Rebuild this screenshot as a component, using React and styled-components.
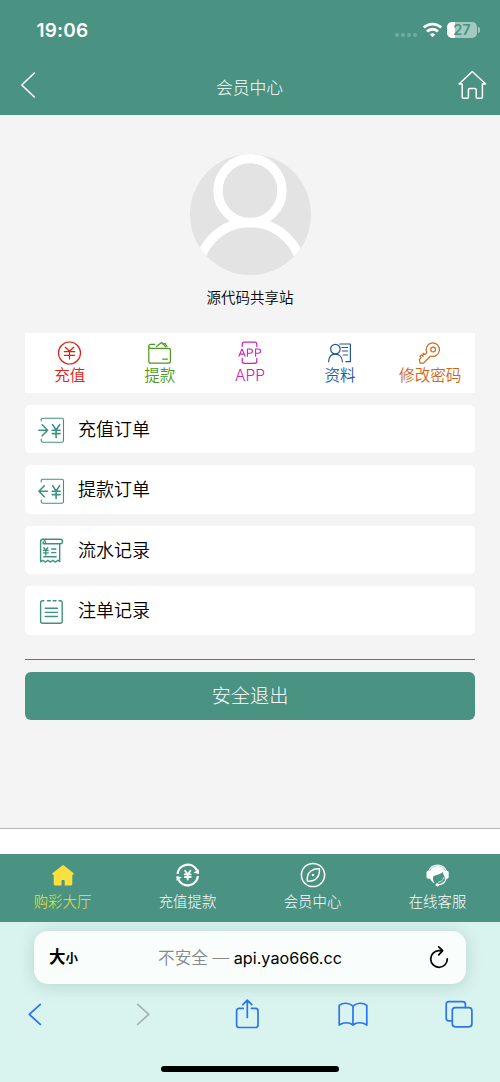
import React from 'react';
import styled, { createGlobalStyle } from 'styled-components';

const GREEN = '#4a9282';
const ICON_GREEN = '#3f927f';

const GlobalStyle = createGlobalStyle`
    * {
        box-sizing: border-box;
    }
    body {
        margin: 0;
        background: #fff;
        font-family: Inter, "Noto Sans CJK SC", sans-serif;
    }
    svg {
        display: block;
        flex: none;
        overflow: visible;
    }
`;

const Page = styled.div`
    display: flex;
    flex-direction: column;
    width: 500px;
    height: 1082px;
    overflow: hidden;
`;

const Header = styled.header`
    height: 114.5px;
    flex: none;
    background: ${GREEN};
    color: #fff;
`;

const StatusBar = styled.div`
    display: flex;
    align-items: center;
    justify-content: space-between;
    height: 60px;
    padding: 0 20px 0 36.5px;
`;

const Clock = styled.span`
    padding-top: 2px;
    font-size: 19px;
    font-weight: 600;
    line-height: 24px;
    letter-spacing: 0.2px;
`;

const StatusIcons = styled.div`
    display: flex;
    align-items: center;
`;

const Dots = styled.div`
    display: flex;
    gap: 2px;
    margin: 9px 6px 0 0;
    span {
        width: 4px;
        height: 4px;
        border-radius: 50%;
        background: #72aca0;
    }
`;

const Battery = styled.div`
    display: flex;
    align-items: center;
    justify-content: center;
    width: 30px;
    height: 16px;
    margin-left: 5px;
    border-radius: 5px;
    background: linear-gradient(90deg, #fff 8px, #a3cac1 8px);
    color: ${GREEN};
    font-size: 14.5px;
    font-weight: 600;
    line-height: 16px;
`;

const BatteryTip = styled.div`
    width: 2px;
    height: 6px;
    margin-left: 1px;
    border-radius: 0 2px 2px 0;
    background: #a3cac1;
`;

const NavBar = styled.div`
    display: flex;
    align-items: center;
    justify-content: space-between;
    height: 50px;
    padding: 0 13px 0 20px;
`;

const NavTitle = styled.h1`
    margin: 6px 0 0 6px;
    font-size: 16.8px;
    font-weight: 300;
    line-height: 24px;
`;

const Content = styled.main`
    display: flex;
    flex-direction: column;
    height: 714.5px;
    flex: none;
    padding: 39.5px 24.7px 0;
    border-bottom: 1px solid #b8b8b8;
    background: #f4f4f4;
`;

const Profile = styled.div`
    display: flex;
    flex-direction: column;
    align-items: center;
    height: 179px;
`;

const UserName = styled.div`
    margin-top: 11px;
    font-size: 14.5px;
    font-weight: 350;
    line-height: 24px;
    color: #000;
`;

const QuickBar = styled.nav`
    display: grid;
    grid-template-columns: repeat(5, 1fr);
    height: 60px;
    background: #fff;
`;

const QuickItem = styled.div`
    display: flex;
    flex-direction: column;
    align-items: center;
    padding-top: 8px;
    color: ${(props) => props.$color};
    font-size: 15.6px;
    font-weight: 350;
    line-height: 22px;
    white-space: nowrap;
    svg {
        stroke: currentColor;
    }
`;

const List = styled.div`
    display: flex;
    flex-direction: column;
    gap: 12.1px;
    margin-top: 12px;
`;

const ListRow = styled.div`
    display: flex;
    align-items: center;
    height: 48.4px;
    padding: 1.6px 0 0 13.3px;
    border-radius: 5px;
    background: #fff;
    color: #000;
    font-size: 18px;
    font-weight: 350;
    line-height: 26px;
    svg {
        margin: 1px 12px 0 0;
        stroke: ${ICON_GREEN};
    }
`;

const Divider = styled.div`
    height: 1px;
    margin: 24px 0 12px;
    background: #3c8878;
`;

const LogoutButton = styled.button`
    height: 48.2px;
    padding: 0 0 2px;
    border: 0;
    border-radius: 6px;
    background: ${GREEN};
    color: #fff;
    font-family: inherit;
    font-size: 19.2px;
    font-weight: 300;
`;

const TabBar = styled.nav`
    display: grid;
    grid-template-columns: repeat(4, 1fr);
    height: 68px;
    flex: none;
    margin-top: 24.7px;
    background: ${GREEN};
`;

const Tab = styled.div`
    display: flex;
    flex-direction: column;
    align-items: center;
    padding-top: 8px;
    color: ${(props) => (props.$active ? '#f4e23c' : '#fff')};
    font-size: 14.4px;
    font-weight: 300;
    line-height: 22px;
    svg {
        margin-bottom: 3px;
    }
`;

const Browser = styled.footer`
    flex: 1;
    display: flex;
    flex-direction: column;
    align-items: center;
    padding-top: 9.5px;
    background: #d9f3ee;
    overflow: hidden;
`;

const AddressBar = styled.div`
    display: flex;
    align-items: center;
    justify-content: space-between;
    width: 432px;
    height: 53px;
    flex: none;
    padding: 0 17px 0 15px;
    border-radius: 14px;
    background: #f9fdfc;
    box-shadow: 0 2px 16px rgba(60, 110, 98, 0.22);
    color: #000;
    font-size: 16.2px;
    line-height: 24px;
`;

const TextSize = styled.div`
    width: 32px;
    font-size: 16.5px;
    font-weight: 600;
    small {
        font-size: 12.5px;
    }
`;

const Url = styled.div`
    margin-right: 10px;
    white-space: pre;
    span {
        color: #858988;
        font-size: 16.6px;
        font-weight: 350;
    }
`;

const BrowserTools = styled.div`
    display: flex;
    justify-content: space-between;
    align-self: stretch;
    height: 60px;
    padding: 12px 23px 0 17px;
    svg {
        stroke: #2c74f0;
    }
`;

const HomeIndicator = styled.div`
    width: 178px;
    height: 6px;
    margin-top: 22px;
    border-radius: 3px;
    background: #000;
`;

const Svg = ({ w, h = w, sw = 1.2, children }) => (
    <svg
        width={w}
        height={h}
        viewBox={`0 0 ${w} ${h}`}
        fill="none"
        stroke="currentColor"
        strokeWidth={sw}
        strokeLinecap="round"
        strokeLinejoin="round"
    >
        {children}
    </svg>
);

const WifiIcon = () => (
    <Svg w={19} h={15} sw={2.8}>
        <path strokeLinecap="butt" d="M.8 4.6a12.5 12.5 0 0 1 17.4 0" />
        <path strokeLinecap="butt" d="M4 8.5a7.8 7.8 0 0 1 11 0" />
        <path d="M9.5 14.3L6.8 11.6a4 4 0 0 1 5.4 0z" fill="currentColor" stroke="none" />
    </Svg>
);

const Avatar = () => (
    <svg width="121" height="121" viewBox="0 0 121 121">
        <clipPath id="avatar">
            <circle cx="60.5" cy="60.5" r="60.5" />
        </clipPath>
        <g clipPath="url(#avatar)" fill="none" stroke="#fff" strokeWidth="9.4">
            <rect width="121" height="121" fill="#e3e3e3" stroke="none" />
            <circle cx="60" cy="36.6" r="32" />
            <circle cx="60" cy="120.8" r="52.3" />
        </g>
    </svg>
);

const quickItems = [
    {
        label: '充值',
        color: '#e3200f',
        icon: (
            <Svg w={24}>
                <circle cx="11.5" cy="12" r="11" />
                <path d="M7.3 6.2l4.2 4.1 4.2-4.1M11.5 10.3V18M6.3 10.7h10.4M6.3 14.3h10.4" />
            </Svg>
        )
    },
    {
        label: '提款',
        color: '#4a9a1f',
        icon: (
            <Svg w={24}>
                <path d="M.8 4.5v15.7c0 1.4.9 2 2 2h17.6c1.2 0 2-.8 2-2V9.1c0-1.2-.8-1.8-2-1.8H3C1.6 7.3.8 6.3.8 5.1s.9-1.8 2-1.8h4M8.4 5.5l5.2-4 3.8 4M15.6 2.9l1.4-.6 2 3.2M14.8 18.2h4.5" />
            </Svg>
        )
    },
    {
        label: 'APP',
        color: '#cb23b5',
        icon: (
            <Svg w={24}>
                <path d="M4.2 5.4V3.2c0-1.3.8-2 2-2h10.6c1.2 0 2 .7 2 2v2.2M4.2 17.4v2.9c0 1.3.8 2 2 2h10.6c1.2 0 2-.7 2-2v-2.9" />
                <path strokeWidth="1.1" d="M.9 15.2L4 7.9l3.1 7.3M1.9 13.1h4.2M9.4 15.2V8h2.9a2.1 2.1 0 0 1 0 4.2H9.4M17.6 15.2V8h2.9a2.1 2.1 0 0 1 0 4.2h-2.9" />
            </Svg>
        )
    },
    {
        label: '资料',
        color: '#235896',
        icon: (
            <Svg w={24}>
                <circle cx="7.4" cy="8.1" r="4.8" />
                <path d="M.6 20.7c.2-4.6 2.8-7.6 6.8-7.6s6.8 3 7 7.6M11.8 3h10.6v17.7h-4.5M13.8 6.5h5.8M14.3 10h5.3M15.3 14h4.3" />
            </Svg>
        )
    },
    {
        label: '修改密码',
        color: '#cf681a',
        icon: (
            <Svg w={24}>
                <circle cx="15.1" cy="8.6" r="2.4" />
                <path d="M8.8 11.6a6.7 6.7 0 1 1 3.9 3.4L5.6 22.2H2.1l-.9-3.5 1.9-1.9-1.2-1.6 1.5-1.3 1.6 1.4.1-3 1.9 1.2z" />
            </Svg>
        )
    }
];

const yen = 'M14.6 8.6l3.5 5.4 3.6-5.4M18.1 14v7.4M14.2 14.2h7.9M14.2 17.6h7.9';
const ticketBox = 'M3.2 5V3.8c0-1.1.6-1.6 1.6-1.6h18.9c1.1 0 1.8.7 1.8 1.8v20.4c0 1.1-.7 1.8-1.8 1.8H4.8c-1 0-1.6-.5-1.6-1.6V23';

const listItems = [
    {
        label: '充值订单',
        icon: (
            <Svg w={28} sw={1.1}>
                <path d={ticketBox} />
                <path strokeWidth="1.6" d={`M.9 14.3h8.5M4.2 8.8l5.4 5.5-5.4 5.5${yen}`} />
            </Svg>
        )
    },
    {
        label: '提款订单',
        icon: (
            <Svg w={28} sw={1.1}>
                <path d={ticketBox} />
                <path strokeWidth="1.6" d={`M9.5 14.3H1M6.3 8.8L.9 14.3l5.4 5.5${yen}`} />
            </Svg>
        )
    },
    {
        label: '流水记录',
        icon: (
            <Svg w={28} sw={1.4}>
                <path d="M5 2.3h17.2c3.1 0 3.1 4.4 0 4.4H7.3M7.3 6.7c.2-2.8-.8-4.4-2.5-4.4-1.6 0-2.2 1-2.2 2.5v20l2.3-1.5 2.5 1.8 2.5-1.8 2.5 1.8 2.5-1.8 2.5 1.8 2.5-1.8 1.8 1.3V6.7M7.3 6.7H5.2V4.8" />
                <path d="M5.8 10.7l2 2.6 2-2.6M7.8 13.3V18M5.5 13.4h4.7M5.5 15.9h4.7M13.6 12h4.2M13.6 15.6h4.2M5.8 19.8h12.3" />
            </Svg>
        )
    },
    {
        label: '注单记录',
        icon: (
            <Svg w={28} sw={1.4}>
                <path d="M5.8 2.7H4.6c-1.2 0-2 .8-2 2v18.6c0 1.2.8 2 2 2h17.6c1.2 0 2-.8 2-2V4.7c0-1.2-.8-2-2-2H21M9.5 2.7h2.8M15.2 2.7H18M7.3 10.2h12.2M7.3 14.4h12.2M7.3 18.5h12.2" />
            </Svg>
        )
    }
];

const tabs = [
    {
        label: '购彩大厅',
        active: true,
        icon: (
            <Svg w={26}>
                <path
                    fill="#fae03f"
                    stroke="none"
                    d="M12 3.8c.7-.6 1.5-.6 2.2 0l9.1 7.3c.9.8.5 1.7-.5 1.7h-.5v9c0 1-.5 1.6-1.5 1.6h-6.1v-4.2c0-.8-.5-1.3-1.2-1.3h-.8c-.7 0-1.2.5-1.2 1.3v4.2H5.2c-1 0-1.5-.6-1.5-1.6v-9h-.5c-1 0-1.4-.9-.5-1.7z"
                />
            </Svg>
        )
    },
    {
        label: '充值提款',
        icon: (
            <Svg w={26} sw={2}>
                <path strokeLinecap="butt" strokeWidth="2.3" d="M2.5 11.9A10.3 10.3 0 0 1 22 8.4M22.9 14.1A10.3 10.3 0 0 1 3.4 17.6" />
                <path fill="currentColor" stroke="none" d="M18.6 10.8l5.2-3.6.2 4.8zM6.8 15.2l-5.2 3.6-.2-4.8z" />
                <path strokeWidth="1.8" d="M10.1 8.8l2.6 3.7 2.7-3.7M12.7 12.5v5M9.8 12.4h5.9M9.8 15h5.9" />
            </Svg>
        )
    },
    {
        label: '会员中心',
        icon: (
            <Svg w={26} sw={1.5}>
                <circle cx="13" cy="13" r="11.6" />
                <path d="M19.4 6.8c.4 4.8-1.1 8.6-4.3 10.8-2.5 1.6-5 1.9-7.8 1.4-.5-4.3.8-7.8 3.6-10 2.6-1.9 5.3-2.4 8.5-2.2z" />
                <circle cx="13" cy="13" r="1.3" fill="currentColor" stroke="none" />
            </Svg>
        )
    },
    {
        label: '在线客服',
        icon: (
            <Svg w={26} sw={1.1}>
                <path d="M3.6 9.4a9.6 9.6 0 0 1 18 0" />
                <g fill="currentColor" stroke="none">
                    <path d="M4.8 9.2C6 5.8 8.9 3.9 12.6 3.9s6.6 1.9 7.8 5.3l-.4 5.6c-1.3-1.1-2-2.7-1.9-5-2.4 2.7-6.6 2.8-9.7 4.5-.9 2.4-.4 4.9 1.3 7-2.4-1-4.2-3.1-5-5.9z" />
                    <path d="M3.5 8.8h2.3v8H3.5c-1.3 0-2-.8-2-2v-4c0-1.2.7-2 2-2zM21.7 8.8h-2v8h2c1.3 0 2-.8 2-2v-4c0-1.2-.7-2-2-2z" />
                    <ellipse cx="12.5" cy="22.8" rx="2" ry="1.6" />
                </g>
                <path d="M21.2 16.5c-1 3.6-3.4 5.8-7.6 6.3" />
                <path strokeWidth=".8" d="M18.8 15.6c-.8 2.7-2.6 4.4-5.2 4.5" />
            </Svg>
        )
    }
];

export default function App () {
    return (
        <Page>
            <GlobalStyle />
            <Header>
                <StatusBar>
                    <Clock>19:06</Clock>
                    <StatusIcons>
                        <Dots>
                            <span />
                            <span />
                            <span />
                            <span />
                        </Dots>
                        <WifiIcon />
                        <Battery>27</Battery>
                        <BatteryTip />
                    </StatusIcons>
                </StatusBar>
                <NavBar>
                    <Svg w={16} h={26} sw={1.6}>
                        <path d="M14.3 1L1.8 13l12.5 12" />
                    </Svg>
                    <NavTitle>会员中心</NavTitle>
                    <Svg w={30} sw={1.5}>
                        <path d="M2 14L15.3 1.5 28.6 14h-3.2v13c0 .8-.5 1.3-1.3 1.3h-3.6c-.8 0-1.3-.5-1.3-1.3v-7.2c0-.8-.4-1.3-1.2-1.3h-5.4c-.8 0-1.2.5-1.2 1.3V27c0 .8-.5 1.3-1.3 1.3H6.5c-.8 0-1.3-.5-1.3-1.3V14z" />
                    </Svg>
                </NavBar>
            </Header>
            <Content>
                <Profile>
                    <Avatar />
                    <UserName>源代码共享站</UserName>
                </Profile>
                <QuickBar>
                    {quickItems.map((item) => (
                        <QuickItem key={item.label} $color={item.color}>
                            {item.icon}
                            {item.label}
                        </QuickItem>
                    ))}
                </QuickBar>
                <List>
                    {listItems.map((item) => (
                        <ListRow key={item.label}>
                            {item.icon}
                            {item.label}
                        </ListRow>
                    ))}
                </List>
                <Divider />
                <LogoutButton>安全退出</LogoutButton>
            </Content>
            <TabBar>
                {tabs.map((tab) => (
                    <Tab key={tab.label} $active={tab.active}>
                        {tab.icon}
                        {tab.label}
                    </Tab>
                ))}
            </TabBar>
            <Browser>
                <AddressBar>
                    <TextSize>大<small>小</small></TextSize>
                    <Url><span>不安全 — </span>api.yao666.cc</Url>
                    <Svg w={20} h={24} sw={1.7}>
                        <path d="M18.3 12.8a8.3 8.3 0 1 1-8.3-8.1h3.4M9.7.8l4 3.9-4 4.2" />
                    </Svg>
                </AddressBar>
                <BrowserTools>
                    <Svg w={36} sw={1.8}>
                        <path d="M23.3 8.4L12.3 18.4l11 10" />
                    </Svg>
                    <Svg w={36} sw={1.8}>
                        <path stroke="#a4b5b2" d="M14.7 8.4l11 10-11 10" />
                    </Svg>
                    <Svg w={36} sw={1.7}>
                        <path d="M14.2 12.3h-4c-1.6 0-2.6 1-2.6 2.6v14c0 1.6 1 2.6 2.6 2.6h16.2c1.6 0 2.6-1 2.6-2.6v-14c0-1.6-1-2.6-2.6-2.6h-4M18.3 21.5v-17M13.8 8.7l4.5-4.5 4.5 4.5" />
                    </Svg>
                    <Svg w={36} sw={1.7}>
                        <path d="M18 10.2c-3.6-3.8-10.2-3.8-13.8-.8v19.6c4.4-3 10.2-3 13.8 0 3.6-3 9.4-3 13.8 0V9.4c-3.6-3-10.2-3-13.8.8zM18 10.2v18.8" />
                    </Svg>
                    <Svg w={36} sw={1.7}>
                        <path d="M11 24.8H7.8c-1.6 0-2.6-1-2.6-2.6V8.2c0-1.6 1-2.6 2.6-2.6h14c1.6 0 2.6 1 2.6 2.6v3.4" />
                        <rect x="11.3" y="11.6" width="19.6" height="19.2" rx="3" />
                    </Svg>
                </BrowserTools>
                <HomeIndicator />
            </Browser>
        </Page>
    );
}
